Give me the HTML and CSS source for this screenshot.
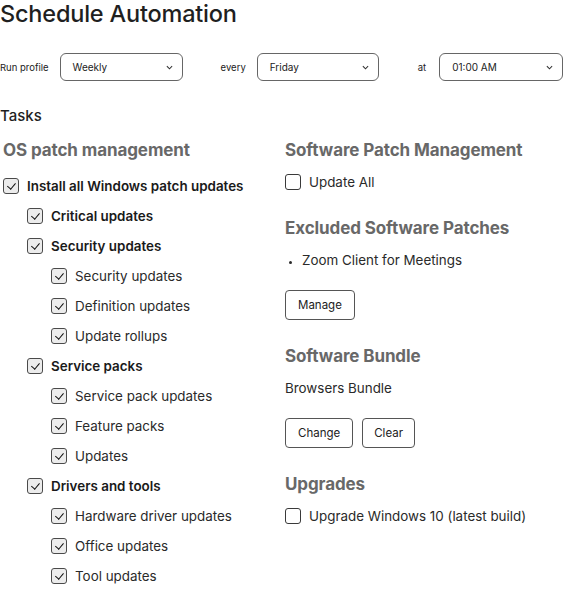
FILE: index.html
```html
<!DOCTYPE html>
<html>
<head>
<meta charset="utf-8">
<link rel="stylesheet" href="styles.css">
</head>
<body>
<h1 class="title">Schedule Automation</h1>
<div class="profile">
  <span class="plabel">Run profile</span>
  <div class="select s1"><span>Weekly</span><svg class="chev" viewBox="0 0 8 5" width="7" height="5"><path d="M1 1l3 3 3-3" fill="none" stroke="#333" stroke-width="1.2"/></svg></div>
  <span class="plabel every">every</span>
  <div class="select s2"><span>Friday</span><svg class="chev" viewBox="0 0 8 5" width="7" height="5"><path d="M1 1l3 3 3-3" fill="none" stroke="#333" stroke-width="1.2"/></svg></div>
  <span class="plabel at">at</span>
  <div class="select s3"><span>01:00 AM</span><svg class="chev" viewBox="0 0 8 5" width="7" height="5"><path d="M1 1l3 3 3-3" fill="none" stroke="#333" stroke-width="1.2"/></svg></div>
</div>
<h2 class="tasks">Tasks</h2>
<div class="cols">
  <div class="left">
    <h3 class="sec">OS patch management</h3>
    <div class="row l0 bold"><span class="cb on"></span>Install all Windows patch updates</div>
    <div class="row l1 bold"><span class="cb on"></span>Critical updates</div>
    <div class="row l1 bold"><span class="cb on"></span>Security updates</div>
    <div class="row l2"><span class="cb on"></span>Security updates</div>
    <div class="row l2"><span class="cb on"></span>Definition updates</div>
    <div class="row l2"><span class="cb on"></span>Update rollups</div>
    <div class="row l1 bold"><span class="cb on"></span>Service packs</div>
    <div class="row l2"><span class="cb on"></span>Service pack updates</div>
    <div class="row l2"><span class="cb on"></span>Feature packs</div>
    <div class="row l2"><span class="cb on"></span>Updates</div>
    <div class="row l1 bold"><span class="cb on"></span>Drivers and tools</div>
    <div class="row l2"><span class="cb on"></span>Hardware driver updates</div>
    <div class="row l2"><span class="cb on"></span>Office updates</div>
    <div class="row l2"><span class="cb on"></span>Tool updates</div>
  </div>
  <div class="right">
    <h3 class="sec">Software Patch Management</h3>
    <div class="row rrow"><span class="cb"></span>Update All</div>
    <h3 class="sec sec2">Excluded Software Patches</h3>
    <ul class="list"><li>Zoom Client for Meetings</li></ul>
    <div class="btns"><button class="btn">Manage</button></div>
    <h3 class="sec sec3">Software Bundle</h3>
    <p class="bundle">Browsers Bundle</p>
    <div class="btns"><button class="btn">Change</button><button class="btn narrow">Clear</button></div>
    <h3 class="sec sec3">Upgrades</h3>
    <div class="row rrow"><span class="cb"></span>Upgrade Windows 10 (latest build)</div>
  </div>
</div>
</body>
</html>
```
FILE: styles.css
```css
* { box-sizing: border-box; }
body {
  margin: 0;
  font-family: Inter, "Noto Sans", sans-serif;
  color: #1f1f1f;
  background: #fff;
}
.title {
  margin: 0;
  font-size: 23.5px;
  font-weight: 500;
  line-height: 28px;
  letter-spacing: -0.2px;
}
.profile {
  display: flex;
  align-items: center;
  margin-top: 25px;
  height: 28px;
}
.plabel {
  font-size: 9.5px;
  color: #222;
}
.every { margin-left: 38px; }
.at { margin-left: 39px; }
.select {
  display: flex;
  align-items: center;
  justify-content: space-between;
  height: 28px;
  border: 1px solid #666;
  border-radius: 6px;
  padding: 0 9px 0 12px;
  font-size: 10px;
  color: #222;
  margin-left: 11px;
}
.s1 { width: 123px; }
.s2 { width: 122px; }
.s3 { width: 124px; margin-left: 13px; }
.chev { display: block; }
.tasks {
  margin: 25px 0 0 0;
  font-size: 15px;
  font-weight: 500;
  line-height: 20px;
}
.cols {
  display: grid;
  grid-template-columns: 282px 1fr;
  padding-left: 3px;
  margin-top: 13px;
}
.sec {
  margin: 0;
  font-size: 17px;
  font-weight: 700;
  color: #686868;
  line-height: 22px;
  letter-spacing: -0.1px;
}
.left .sec { margin-bottom: 10px; }
.row {
  display: flex;
  align-items: center;
  height: 30px;
  font-size: 13.4px;
  color: #2a2a2a;
}
.row.bold { font-weight: 600; color: #1a1a1a; }
.l1 { padding-left: 24px; }
.l2 { padding-left: 48px; }
.cb {
  width: 16px;
  height: 16px;
  border: 1.5px solid #3a3a3a;
  border-radius: 3px;
  margin-right: 8px;
  flex: none;
  position: relative;
  background: #fff;
}
.cb.on {
  background: #ececec;
  border-color: #4a4a4a;
}
.cb.on::after {
  content: "";
  position: absolute;
  left: 4.5px;
  top: 1.5px;
  width: 3.5px;
  height: 7px;
  border-right: 1.6px solid #111;
  border-bottom: 1.6px solid #111;
  transform: rotate(40deg);
}
.rrow { margin-top: 6px; }
.sec2 { margin-top: 20px; }
.sec3 { margin-top: 25px; }
.list {
  margin: 11px 0 0 0;
  padding-left: 17px;
  font-size: 13.4px;
  color: #2a2a2a;
  line-height: 20px;
}
.list li::marker { font-size: 10px; }
.btns {
  display: flex;
  gap: 9px;
  margin-top: 20px;
}
.btn {
  font-family: Inter, "Noto Sans", sans-serif;
  font-size: 11.5px;
  color: #222;
  background: #fff;
  border: 1px solid #555;
  border-radius: 4px;
  height: 30px;
  padding: 0 12px;
}
.btn.narrow { padding: 0 11px; }
.bundle {
  margin: 11px 0 0 0;
  font-size: 13.4px;
  line-height: 20px;
  color: #2a2a2a;
}
```
